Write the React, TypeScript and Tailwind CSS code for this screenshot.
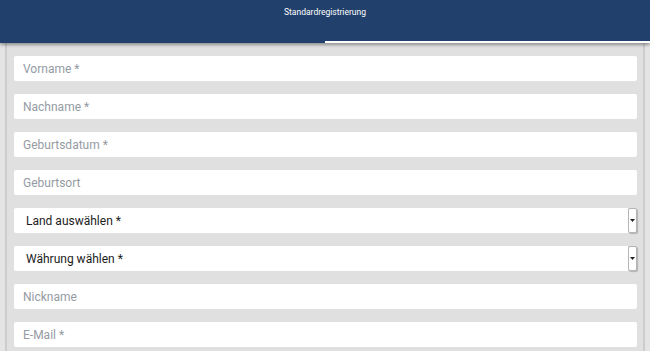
export default function App() {
    const felder = [
        { label: "Vorname *", type: "input" },
        { label: "Nachname *", type: "input" },
        { label: "Geburtsdatum *", type: "input" },
        { label: "Geburtsort", type: "input" },
        { label: "Land auswählen *", type: "select" },
        { label: "Währung wählen *", type: "select" },
        { label: "Nickname", type: "input" },
        { label: "E-Mail *", type: "input" },
    ];

    return (
        <div className="w-[650px] h-[351px] overflow-hidden bg-[#e4e4e4] font-['Roboto',sans-serif]">
            {/* HEADER MIT TAB */}
            <header className="relative z-10 h-[43px] bg-[#22406c] shadow-[0_2px_3px_rgba(0,0,0,0.35)]">
                <div className="pt-[6px] text-center text-[8.5px] text-white">
                    Standardregistrierung
                </div>
                <div className="absolute bottom-0 left-[325px] right-0 h-[2px] bg-white" />
            </header>

            {/* FORMULAR */}
            <div className="mx-[5px] h-full border-x-2 border-[#cdcdcd] bg-[#e0e0e0] pl-[7px] pr-[6px] pt-[13px] flex flex-col gap-[13px]">
                {felder.map((f) =>
                    f.type === "select" ? (
                        <div key={f.label} className="flex h-[25px]">
                            <div className="flex-1 bg-white rounded-l-[2px] flex items-center pl-[12px] text-[12px] text-[#1c1c1c]">
                                {f.label}
                            </div>
                            <div className="w-[9px] bg-white border border-[#b5b5b5] rounded-[2px] shadow-[1px_1px_1px_rgba(0,0,0,0.2)] flex items-center justify-center">
                                <svg width="5" height="3" viewBox="0 0 5 3">
                                    <path d="M0 0h5L2.5 3z" fill="#222" />
                                </svg>
                            </div>
                        </div>
                    ) : (
                        <div key={f.label} className="h-[25px] bg-white rounded-[2px] flex items-center pl-[9px] text-[12px] text-[#959ba3]">
                            {f.label}
                        </div>
                    )
                )}
            </div>
        </div>
    );
}
